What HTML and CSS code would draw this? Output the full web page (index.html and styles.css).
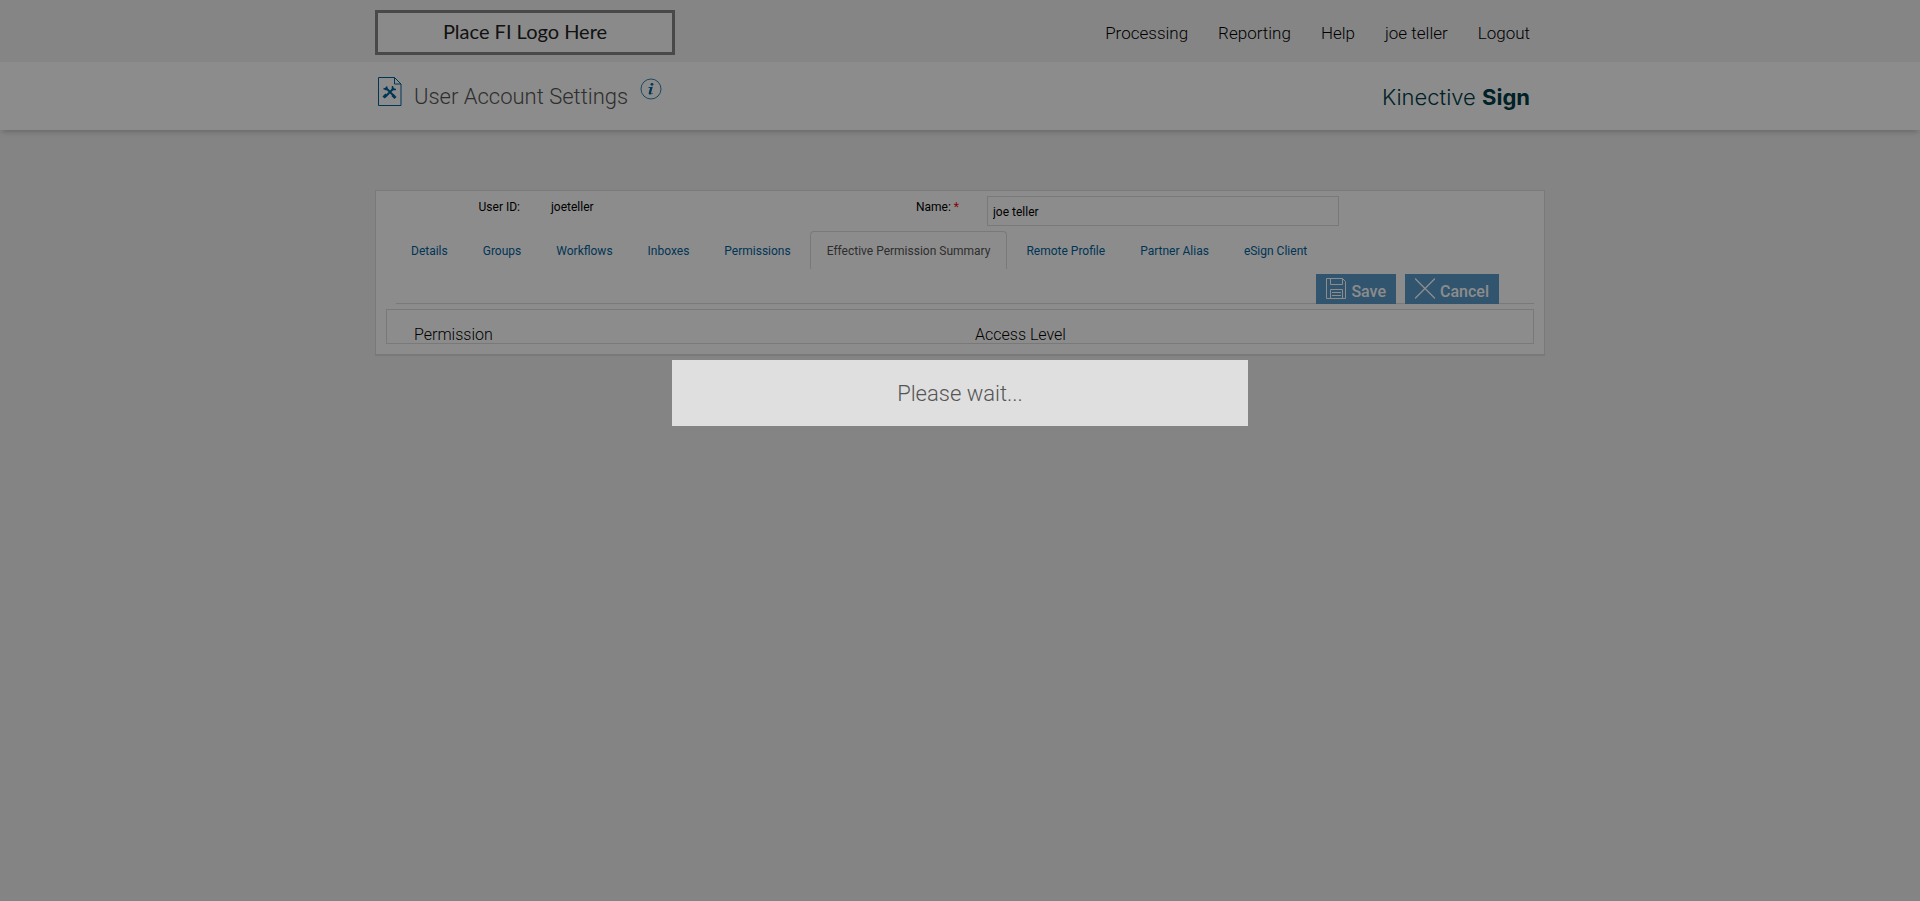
FILE: index.html
```html
<!DOCTYPE html>
<html lang="en">
<head>
<meta charset="utf-8">
<title>User Account Settings</title>
<meta name="viewport" content="width=device-width, initial-scale=1">
<link rel="stylesheet" href="styles.css">
</head>
<body>
<header class="topbar">
  <div class="container topbar-row">
    <div class="fi-logo">Place FI Logo Here</div>
    <nav class="main-nav">
      <a href="#">Processing</a>
      <a href="#">Reporting</a>
      <a href="#">Help</a>
      <a href="#">joe teller</a>
      <a href="#">Logout</a>
    </nav>
  </div>
</header>

<div class="titlebar">
  <div class="container titlebar-row">
    <svg class="page-icon" width="24" height="30" viewBox="0 0 24 30" aria-hidden="true">
      <path d="M.5.5h16l6.500 6.500v21.500h-22.500zM16.500.5v6.500h6.500" fill="none" stroke="currentColor"/>
      <path d="M7.500 10.500l9 9M16 11l-9 9" fill="none" stroke="currentColor" stroke-width="2"/>
      <path d="M5.500 11.500l2.500 1 1-3M14.500 9v3.500h3.500" fill="none" stroke="currentColor" stroke-width="1.500"/>
      <path d="M5.500 20.500l3-3M14.500 18l3 3" fill="none" stroke="currentColor" stroke-width="3"/>
    </svg>
    <h1 class="page-title">User Account Settings</h1>
    <svg class="info-icon" width="22" height="22" viewBox="0 0 22 22" role="img" aria-label="Information">
      <circle cx="11" cy="11" r="10" fill="none" stroke="currentColor" stroke-width=".8"/>
      <circle cx="12" cy="6.300" r="1.400" fill="currentColor"/>
      <path d="M8.500 9.200l4.300-.4-1.800 6.300q-.1.800 1.600-.3l.3.500q-2 1.600-3.600 1.200-1-.5-.5-1.900l1.300-4.500-1.600-.2z" fill="currentColor"/>
    </svg>
    <div class="brand">Kinective <b>Sign</b></div>
  </div>
</div>

<main class="container">
  <form class="panel">
    <div class="fields">
      <span class="field-label">User ID:</span>
      <span class="field-value">joeteller</span>
      <label class="field-label" for="name">Name: <span class="required">*</span></label>
      <input class="field-input" id="name" type="text" value="joe teller">
    </div>
    <nav class="tabs">
      <a class="tab" href="#">Details</a>
      <a class="tab" href="#">Groups</a>
      <a class="tab" href="#">Workflows</a>
      <a class="tab" href="#">Inboxes</a>
      <a class="tab" href="#">Permissions</a>
      <a class="tab tab-active" href="#">Effective Permission Summary</a>
      <a class="tab" href="#">Remote Profile</a>
      <a class="tab" href="#">Partner Alias</a>
      <a class="tab" href="#">eSign Client</a>
    </nav>
    <div class="actions">
      <button class="btn" type="button">
        <svg width="20" height="22" viewBox="0 0 20 22" aria-hidden="true">
          <path d="M.5.500h16l3 3v17h-19zM4.500.500v6h12v-6M4.500 20.500v-9h12v9M6 14.500h9M6 17.500h9" fill="none" stroke="currentColor"/>
        </svg>
        <span>Save</span>
      </button>
      <button class="btn" type="button">
        <svg width="20" height="22" viewBox="0 0 20 22" aria-hidden="true">
          <path d="M0 .500l20 20M20 .500l-20 20" fill="none" stroke="currentColor" stroke-width="1.300"/>
        </svg>
        <span>Cancel</span>
      </button>
    </div>
    <table class="summary">
      <thead>
        <tr><th>Permission</th><th>Access Level</th></tr>
      </thead>
    </table>
  </form>
</main>

<div class="overlay"></div>
<div class="wait" role="alert">Please wait...</div>
</body>
</html>
```
FILE: styles.css
```css
* { box-sizing: border-box; }

body {
  margin: 0;
  background: #f0f0f0;
  color: #000;
  font: 12px/16px Roboto, "Liberation Sans", sans-serif;
}

a { text-decoration: none; }

.container {
  max-width: 1170px;
  margin: 0 auto;
}

.topbar { background: #f3f3f3; }

.topbar-row {
  display: flex;
  align-items: flex-start;
  justify-content: space-between;
  height: 62px;
  padding: 10px 15px 0 0;
}

.fi-logo {
  width: 300px;
  height: 45px;
  border: 3px solid #868686;
  background: #fbfbfb;
  font: 20px/36px Lato, sans-serif;
  color: #222;
  text-align: center;
}

.main-nav {
  display: flex;
  gap: 30px;
  padding-top: 11px;
  font-size: 17px;
  line-height: 24px;
  font-weight: 300;
}

.main-nav a { color: #000; }

.titlebar {
  background: #fff;
  box-shadow: 0 4px 5px -2px rgba(0, 0, 0, .2);
}

.titlebar-row {
  display: flex;
  align-items: flex-start;
  height: 68px;
  padding: 15px 15px 0 3px;
}

.page-icon { color: #00639c; }

.page-title {
  margin: 5px 12px 0 12px;
  font-size: 22px;
  line-height: 30px;
  font-weight: 300;
  color: #555;
}

.info-icon { margin-top: 1px; color: #00639c; }

.brand {
  margin: 5px 0 0 auto;
  font: 300 22px/30px Inter, sans-serif;
  color: #003c46;
}

.brand b { font-weight: 700; }

.panel {
  margin-top: 60px;
  padding: 5px 10px 10px;
  border: 1px solid #dcdcdc;
  border-bottom-width: 2px;
  background: #fff;
}

.fields {
  display: grid;
  grid-template-columns: 134px 1fr 138px 352px 195px;
  column-gap: 30px;
  margin-right: -30px;
}

.field-label { padding-top: 3px; text-align: right; }

label.field-label { margin-right: -2px; }

.field-value { padding: 3px 0 0 1px; }

.required { color: #f00; }

.field-input {
  width: 100%;
  height: 30px;
  padding: 1px 5px 0;
  border: 1px solid #ddd;
  background: #fff;
  color: #000;
  font: inherit;
}

.tabs {
  display: flex;
  gap: 3px;
  margin-top: 5px;
  padding-left: 9px;
}

.tab {
  height: 38px;
  padding: 11px 15px;
  border: 1px solid transparent;
  border-bottom: 0;
  border-radius: 4px 4px 0 0;
  color: #00639c;
}

.tab-active {
  padding: 11px 16px;
  border-color: #ddd;
  color: #555;
}

.actions {
  display: flex;
  justify-content: flex-end;
  gap: 9px;
  margin: 5px 0 5px 10px;
  padding-right: 35px;
  background: linear-gradient(#dcdcdc, #dcdcdc) 0 100% / 100% 1px no-repeat;
}

.btn {
  display: flex;
  gap: 5px;
  height: 30px;
  padding: 4px 10px 0;
  border: 0;
  background: #599aca;
  color: #fff;
  font: 500 16px/28px Roboto, sans-serif;
}

.summary {
  width: 100%;
  height: 35px;
  border: 1px solid #dcdcdc;
  border-spacing: 0;
}

.summary th {
  width: 50%;
  padding: 17px 0 0 27px;
  font-size: 16px;
  line-height: 16px;
  font-weight: 300;
  text-align: left;
}

.summary th + th { padding-left: 15px; }

.overlay {
  position: fixed;
  inset: 0;
  background: rgba(0, 0, 0, .45);
}

.wait {
  position: fixed;
  top: 40%;
  left: 35%;
  width: 30%;
  padding: 18px 18px 16px;
  background: #dfdfdf;
  color: #555;
  font-size: 22px;
  line-height: 32px;
  font-weight: 300;
  text-align: center;
}
```
